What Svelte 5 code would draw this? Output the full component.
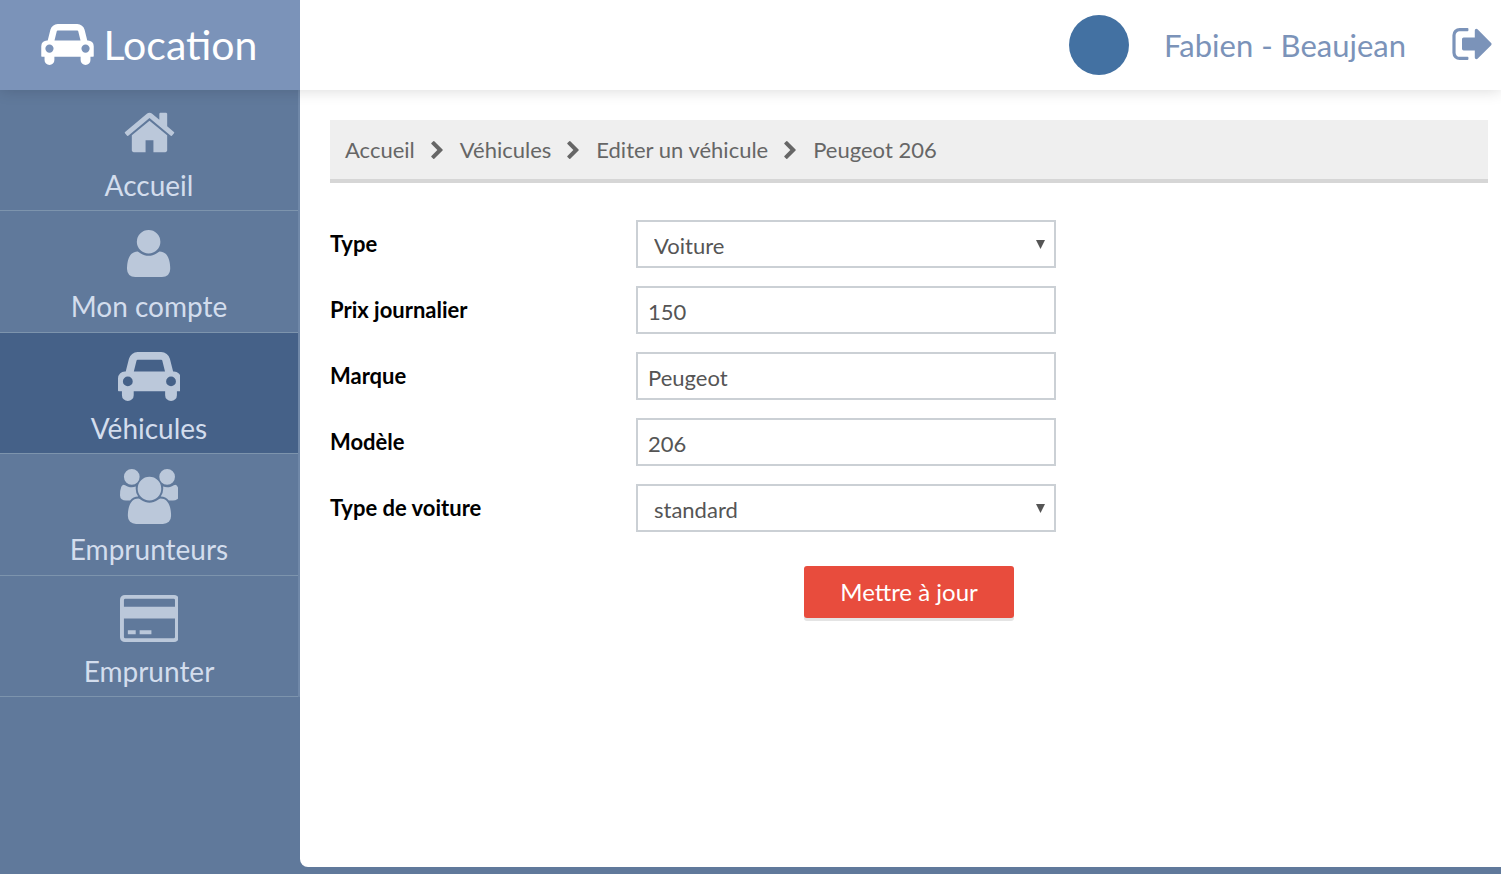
<script>
  const carPath =
    'M480 1088q0-66-47-113t-113-47-113 47-47 113 47 113 113 47 113-47 47-113zm36-320h1016l-89-357q-2-8-14-17.5t-21-9.5h-768q-9 0-21 9.5t-14 17.5zm1372 320q0-66-47-113t-113-47-113 47-47 113 47 113 113 47 113-47 47-113zm160-96v384q0 14-9 23t-23 9h-96v128q0 80-56 136t-136 56-136-56-56-136v-128h-1024v128q0 80-56 136t-136 56-136-56-56-136v-128h-96q-14 0-23-9t-9-23v-384q0-93 65.5-158.5t158.5-65.5h28l105-419q23-94 104-157.5t179-63.5h768q98 0 179 63.5t104 157.5l105 419h28q93 0 158.5 65.5t65.5 158.5z';

  // Glyphs with `flip` are described with the y axis pointing up.
  const items = [
    {
      label: 'Accueil',
      width: 1792,
      flip: false,
      path: 'M1472 992v480q0 26-19 45t-45 19h-384v-384h-256v384h-384q-26 0-45-19t-19-45v-480q0-1 .5-3t.5-3l575-474 575 474q1 2 1 6zm223-69l-62 74q-8 9-21 11h-3q-13 0-21-7l-692-577-692 577q-12 8-24 7-13-2-21-11l-62-74q-8-10-7-23.5t11-21.5l719-599q32-26 76-26t76 26l244 204v-195q0-14 9-23t23-9h192q14 0 23 9t9 23v408l219 182q10 8 11 21.5t-7 23.5z'
    },
    {
      label: 'Mon compte',
      width: 1408,
      flip: true,
      path: 'M1408 131q0-120-73-189.5t-194-69.5h-874q-121 0-194 69.5t-73 189.5q0 53 3.5 103.5t14 109 26.5 108.5 43 97.5 62 81 85.5 53.5 111.5 20q9 0 42-21.5t74.5-48 108-48 133.5-21.5 133.5 21.5 108 48 74.5 48 42 21.5q61 0 111.500-20t85.5-53.5 62-81 43-97.5 26.5-108.5 14-109 3.5-103.5zM1088 1024q0-159-112.5-271.5t-271.5-112.5-271.5 112.5-112.5 271.5 112.5 271.5 271.5 112.5 271.5-112.5 112.5-271.5z'
    },
    { label: 'Véhicules', width: 2048, flip: false, path: carPath, active: true },
    {
      label: 'Emprunteurs',
      width: 1920,
      flip: true,
      path: 'M593 640q-162-5-265-128H194Q112 512 56 552.5T0 671q0 353 124 353 6 0 43.5-21t97.5-42.5T384 939q67 0 133 23-5-37-5-66 0-139 81-256zM1664 3q0-120-73-189.5T1397-256H523q-121 0-194 69.5T256 3q0 53 3.5 103.5t14 109T300 324t43 97.5 62 81 85.5 53.5T602 576q10 0 43-21.500t73-48 107-48T960 437t135 21.500 107 48 73 48 43 21.500q61 0 111.500-20t85.500-53.500 62-81 43-97.500 26.500-108.500 14-109T1664 3zM640 1280q0-106-75-181t-181-75-181 75-75 181 75 181 181 75 181-75 75-181zm704-384q0-159-112.5-271.5T960 512 688.5 624.5 576 896t112.5 271.5T960 1280t271.5-112.5T1344 896zm576-225q0-78-56-118.5T1726 512h-134q-103 123-265 128 81 117 81 256 0 29-5 66 66-23 133-23 59 0 119 21.500t97.5 42.5 43.5 21q124 0 124-353zm-128 609q0-106-75-181t-181-75-181 75-75 181 75 181 181 75 181-75 75-181z'
    },
    {
      label: 'Emprunter',
      width: 1920,
      flip: true,
      path: 'M1760 1408q66 0 113-47t47-113v-1216q0-66-47-113t-113-47h-1600q-66 0-113 47t-47 113v1216q0 66 47 113t113 47h1600zM160 1280q-13 0-22.5-9.5t-9.5-22.5v-224h1664v224q0 13-9.5 22.5t-22.5 9.5h-1600zM1760 0q13 0 22.5 9.5t9.5 22.5v608h-1664v-608q0-13 9.5-22.5t22.5-9.5h1600zM256 128v128h256v-128h-256zM640 128v128h384v-128h-384z'
    }
  ];

  const crumbs = ['Accueil', 'Véhicules', 'Editer un véhicule', 'Peugeot 206'];

  const fields = [
    { id: 'type', label: 'Type', options: ['Voiture', 'Moto'] },
    { id: 'prix', label: 'Prix journalier', value: '150' },
    { id: 'marque', label: 'Marque', value: 'Peugeot' },
    { id: 'modele', label: 'Modèle', value: '206' },
    { id: 'type-voiture', label: 'Type de voiture', options: ['standard', 'luxe'] }
  ];
</script>

<div class="app">
  <header>
    <a class="brand" href="#accueil">
      <svg viewBox="0 128 2048 1600" aria-hidden="true"><path fill-rule="evenodd" d={carPath} /></svg>
      <span>Location</span>
    </a>
    <div class="account">
      <span class="avatar"></span>
      <span class="name">Fabien - Beaujean</span>
      <button class="logout" type="button" aria-label="Déconnexion">
        <svg viewBox="0 0 1568 1280" aria-hidden="true">
          <path d="M640 1184q0 4 1 20t.5 26.500-3 23.500-10 19.500-20.500 6.500h-320q-119 0-203.500-84.500t-84.500-203.500v-704q0-119 84.500-203.500t203.500-84.500h320q13 0 22.500 9.500t9.500 22.500q0 4 1 20t.5 26.500-3 23.500-10 19.500-20.500 6.500h-320q-66 0-113 47t-47 113v704q0 66 47 113t113 47h312l11.500 1 11.500 3 8 5.500 7 9 2 13.500z" />
          <path d="M1568 640q0 26-19 45l-544 544q-19 19-45 19t-45-19-19-45v-288h-448q-26 0-45-19t-19-45v-384q0-26 19-45t45-19h448v-288q0-26 19-45t45-19 45 19l544 544q19 19 19 45z" />
        </svg>
      </button>
    </div>
  </header>

  <div class="body">
    <nav>
      <ul>
        {#each items as item}
          <li>
            <a href="#{item.label}" class:active={item.active}>
              <svg viewBox="0 0 {item.width} 1792" aria-hidden="true">
                <path d={item.path} transform={item.flip ? 'translate(0 1536) scale(1 -1)' : undefined} />
              </svg>
              <span>{item.label}</span>
            </a>
          </li>
        {/each}
      </ul>
    </nav>

    <main>
      <ol class="crumbs">
        {#each crumbs as crumb, i}
          <li>
            {#if i > 0}
              <svg viewBox="90 -102 1036 1612" aria-hidden="true">
                <path d="M1107 659l-742-742q-19-19-45-19t-45 19l-166 166q-19 19-19 45t19 45l531 531-531 531q-19 19-19 45t19 45l166 166q19 19 45 19t45-19l742-742q19-19 19-45t-19-45z" />
              </svg>
            {/if}
            <a href="#{crumb}">{crumb}</a>
          </li>
        {/each}
      </ol>

      <form onsubmit={(e) => e.preventDefault()}>
        {#each fields as field}
          <div class="row">
            <label for={field.id}>{field.label}</label>
            {#if field.options}
              <div class="select">
                <select id={field.id}>
                  {#each field.options as option}
                    <option>{option}</option>
                  {/each}
                </select>
                <svg viewBox="0 0 9 9" aria-hidden="true"><path d="M0 0h9L4.500 9z" /></svg>
              </div>
            {:else}
              <input id={field.id} type="text" value={field.value} />
            {/if}
          </div>
        {/each}
        <button class="submit" type="submit">Mettre à jour</button>
      </form>
    </main>
  </div>
</div>

<style>
  :global(body) {
    background: #60799b;
  }

  .app,
  .app * {
    box-sizing: border-box;
  }

  .app {
    display: flex;
    flex-direction: column;
    min-height: 100vh;
    padding-bottom: 7px;
    background: #60799b;
    font-family: Lato, sans-serif;
  }

  a {
    color: inherit;
    text-decoration: none;
  }

  svg {
    display: block;
    fill: currentColor;
  }

  ul,
  ol {
    margin: 0;
    padding: 0;
    list-style: none;
  }

  header {
    position: relative;
    z-index: 1;
    display: flex;
    height: 90px;
    background: #fff;
    box-shadow: 0 0 15px rgba(0, 0, 0, 0.16);
  }

  .brand {
    display: flex;
    align-items: center;
    justify-content: center;
    gap: 10px;
    width: 300px;
    padding: 0 2px 1px 0;
    background: #7b93b9;
    color: #fff;
    font-size: 41px;
    line-height: 48px;
  }

  .brand svg {
    width: 53px;
    height: 41px;
  }

  .account {
    display: flex;
    flex: 1;
    align-items: center;
    justify-content: flex-end;
    padding-right: 9px;
    color: #7b93b9;
    font-size: 31px;
    line-height: 36px;
  }

  .avatar {
    width: 60px;
    height: 60px;
    margin-right: 35px;
    border-radius: 50%;
    background: #4371a2;
  }

  .logout {
    margin-left: 46px;
    padding: 0 0 2px;
    border: 0;
    background: none;
    color: inherit;
  }

  .logout svg {
    width: 40px;
    height: 32px;
  }

  .body {
    display: flex;
    flex: 1;
  }

  nav {
    width: 300px;
  }

  nav ul {
    display: grid;
    grid-template-rows: repeat(5, 1fr);
    height: 607px;
    border-right: 2px solid #7088a8;
  }

  nav a {
    display: flex;
    flex-direction: column;
    align-items: center;
    height: 100%;
    padding-top: 15px;
    border-bottom: 1px solid #7d94ad;
    color: #d3dded;
    font-size: 28px;
    line-height: 32px;
  }

  nav a.active {
    background: #456188;
  }

  nav svg {
    height: 55px;
    margin-bottom: 9px;
    color: #bbc8da;
  }

  main {
    flex: 1;
    min-width: 0;
    padding: 30px 13px 30px 30px;
    border-bottom-left-radius: 8px;
    background: #fff;
  }

  .crumbs {
    display: flex;
    height: 63px;
    padding: 0 15px;
    border-bottom: 4px solid #d6d6d6;
    background: #efefef;
    color: #666;
    font-size: 22px;
  }

  .crumbs li {
    display: flex;
    align-items: center;
  }

  .crumbs svg {
    width: 12px;
    height: 18px;
    margin: 0 17px 0 16px;
  }

  form {
    display: flex;
    flex-direction: column;
    gap: 18px;
    padding-top: 37px;
  }

  .row {
    display: grid;
    grid-template-columns: 306px minmax(0, 420px);
    align-items: center;
  }

  label {
    padding-bottom: 2px;
    color: #000;
    font-size: 22px;
    font-weight: 700;
  }

  .select {
    position: relative;
  }

  .select svg {
    position: absolute;
    top: 20px;
    right: 11px;
    width: 9px;
    height: 9px;
    color: #555;
    pointer-events: none;
  }

  input,
  select {
    display: block;
    width: 100%;
    height: 48px;
    margin: 0;
    padding: 3px 10px 0;
    border: 2px solid #cbd0d5;
    border-radius: 0;
    background: #fff;
    color: #555;
    font-family: inherit;
    font-size: 22px;
    appearance: none;
  }

  select {
    padding-left: 16px;
  }

  .submit {
    align-self: center;
    width: 210px;
    height: 52px;
    margin-top: 16px;
    padding: 0 0 2px;
    border: 0;
    border-radius: 3px;
    background: #e84c3d;
    box-shadow: 0 3px 0 #e4e4e4;
    color: #fff;
    font-family: inherit;
    font-size: 24px;
  }
</style>
